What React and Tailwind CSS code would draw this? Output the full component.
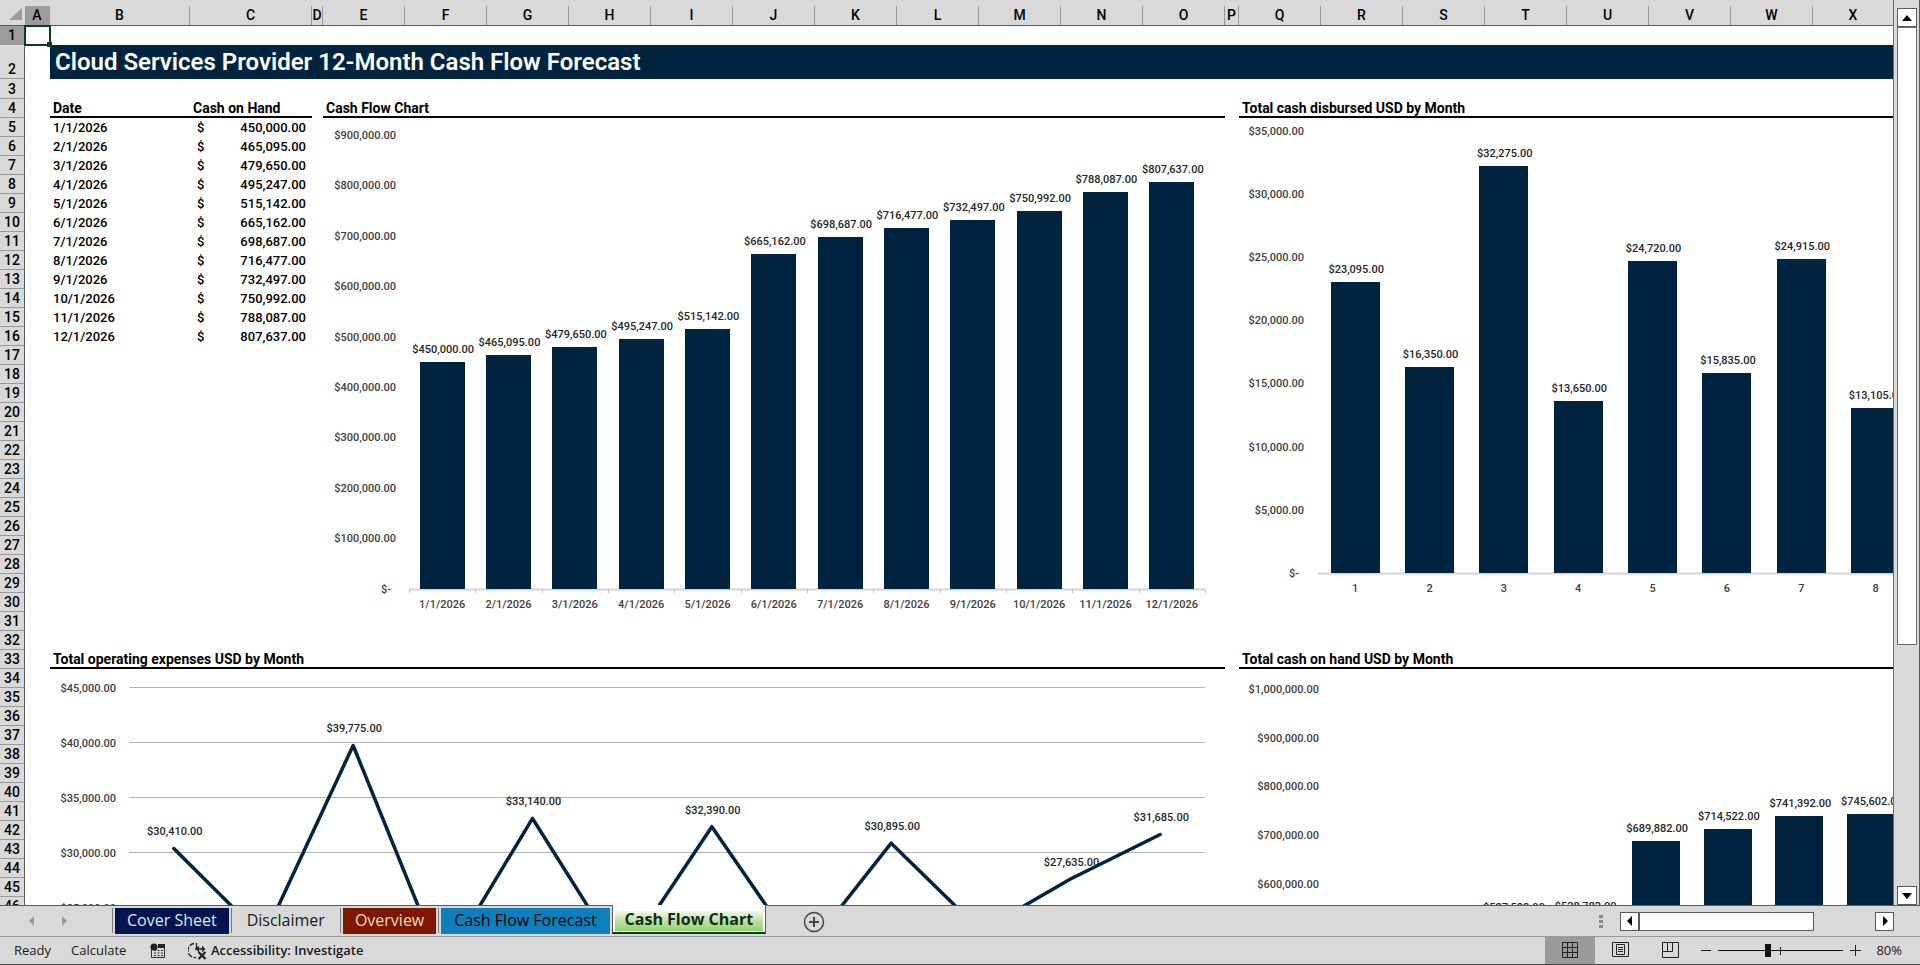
const NAVY = "#00233f";
const FONT = "font-['Roboto','Liberation_Sans',sans-serif]";
const UI_FONT = "font-['Open_Sans','Noto_Sans',sans-serif]";

const COLUMNS = [
  ["A", 25], ["B", 140], ["C", 122], ["D", 11], ["E", 82], ["F", 82], ["G", 82],
  ["H", 82], ["I", 82], ["J", 82], ["K", 82], ["L", 82], ["M", 82], ["N", 82],
  ["O", 82], ["P", 14], ["Q", 82], ["R", 82], ["S", 82], ["T", 82], ["U", 82],
  ["V", 82], ["W", 82], ["X", undefined],
];

const CASH = [
  ["1/1/2026", 450000], ["2/1/2026", 465095], ["3/1/2026", 479650], ["4/1/2026", 495247],
  ["5/1/2026", 515142], ["6/1/2026", 665162], ["7/1/2026", 698687], ["8/1/2026", 716477],
  ["9/1/2026", 732497], ["10/1/2026", 750992], ["11/1/2026", 788087], ["12/1/2026", 807637],
];

const DISBURSED = [23095, 16350, 32275, 13650, 24720, 15835, 24915, 13105].map((v, i) => [String(i + 1), v]);
const EXPENSES = [30410, 22290, 39775, 19645, 33140, 20190, 32390, 20560, 30895, 22925, 27635, 31685];
const ON_HAND = [null, null, 527582, 528782, 689882, 714522, 741392, 745602].map((v, i) => [String(i + 1), v]);

const amount = (v) => v.toLocaleString("en-US", { minimumFractionDigits: 2 });
const money = (v) => "$" + amount(v);

function AxisLabels({ right, top, step, from, by, count }) {
  return Array.from({ length: count }, (_, i) => {
    const v = from - i * by;
    return (
      <text key={i} x={v === 0 ? right - 5 : right} y={top + i * step + 4} textAnchor="end" className="fill-[#404040]">
        {v === 0 ? "$-" : money(v)}
      </text>
    );
  });
}

function BarChart({ label, width, height, data, axis, left, pitch, bar, base, unit, ticks, slots, categoryY }) {
  const yOf = (v) => base - v * unit;
  return (
    <svg role="img" aria-label={label} width={width} height={height} className={`block max-w-none text-[11px] font-medium ${FONT}`}>
      <AxisLabels {...axis} />
      <path d={`M${left} ${base + 0.5}h${pitch * slots}`} stroke="#d4d4d4" strokeWidth="2" />
      {ticks &&
        Array.from({ length: slots + 1 }, (_, i) => (
          <path key={i} d={`M${Math.round(left + i * pitch) + 0.5} ${base}v4`} stroke="#c4c4c4" />
        ))}
      {data.map(([name, v], i) => {
        const cx = left + pitch * (i + 0.5);
        return (
          v !== null && (
            <g key={name}>
              <rect x={Math.round(cx - bar / 2)} y={Math.round(yOf(v))} width={bar} height={Math.round(base - yOf(v))} fill={NAVY} />
              <text x={cx + 1} y={yOf(v) - 9} textAnchor="middle" className="fill-[#262626]">{money(v)}</text>
              {categoryY < height && (
                <text x={cx} y={categoryY} textAnchor="middle" className="fill-[#404040]">{name}</text>
              )}
            </g>
          )
        );
      })}
    </svg>
  );
}

function LineChart({ label, width, height }) {
  const top = 19;
  const step = 55;
  const left = 79;
  const pitch = 90 - 1 / 3;
  const points = EXPENSES.map((v, i) => [left + pitch * (i + 0.5), top + ((45000 - v) / 5000) * step]);
  return (
    <svg role="img" aria-label={label} width={width} height={height} className={`block max-w-none text-[11px] font-medium ${FONT}`}>
      <AxisLabels right={66} top={top} step={step} from={45000} by={5000} count={5} />
      {[0, 1, 2, 3, 4].map((i) => (
        <path key={i} d={`M${left} ${top + i * step - 0.5}h${pitch * 12}`} stroke="#b4b4b4" />
      ))}
      {EXPENSES.map((v, i) => (
        points[i][1] < height && (
          <text key={i} x={points[i][0] + 1} y={points[i][1] - 13} textAnchor="middle" className="fill-[#262626]">{money(v)}</text>
        )
      ))}
      <polyline points={points.map((p) => p.join(",")).join(" ")} fill="none" stroke={NAVY} strokeWidth="3.5" strokeLinecap="round" strokeLinejoin="round" />
    </svg>
  );
}

function Heading({ children, span }) {
  return (
    <td colSpan={span} className="border-b-2 border-black p-0 pl-[3px] align-bottom text-[14px] leading-[16px] font-bold whitespace-nowrap">
      {children}
    </td>
  );
}

function rowCells(n) {
  if (n === 1) {
    return (
      <>
        <td className="relative p-0">
          <div className="absolute -inset-px border-2 border-[#0b3d1d]" />
          <div className="absolute -right-[2px] -bottom-[2px] size-[5px] bg-[#0b3d1d]" />
        </td>
        <td colSpan={23} className="p-0" />
      </>
    );
  }
  if (n === 2) {
    return (
      <>
        <td className="p-0" />
        <td colSpan={23} className="bg-[#00233f] p-0 pl-[5px]">
          <h1 className="text-[24px] leading-[34px] font-semibold whitespace-nowrap text-white">
            Cloud Services Provider 12-Month Cash Flow Forecast
          </h1>
        </td>
      </>
    );
  }
  if (n === 4) {
    return (
      <>
        <td className="p-0" />
        <Heading>Date</Heading>
        <Heading>Cash on Hand</Heading>
        <td className="p-0" />
        <Heading span={11}>Cash Flow Chart</Heading>
        <td className="p-0" />
        <Heading span={8}>Total cash disbursed USD by Month</Heading>
      </>
    );
  }
  if (n === 33) {
    return (
      <>
        <td className="p-0" />
        <Heading span={14}>Total operating expenses USD by Month</Heading>
        <td className="p-0" />
        <Heading span={8}>Total cash on hand USD by Month</Heading>
      </>
    );
  }
  if (n === 34) {
    return (
      <>
        <td className="p-0" />
        <td colSpan={14} rowSpan={13} className="overflow-hidden p-0 align-top">
          <LineChart label="Total operating expenses USD by Month" width={1174} height={247} />
        </td>
        <td className="p-0" />
        <td colSpan={8} rowSpan={13} className="overflow-hidden p-0 align-top">
          <BarChart
            label="Total cash on hand USD by Month" width={980} height={247} data={ON_HAND} slots={12}
            axis={{ right: 80, top: 20, step: 48.7, from: 1000000, by: 100000, count: 5 }}
            left={95} pitch={71.6} bar={48} base={508} unit={0.000487} categoryY={530}
          />
        </td>
      </>
    );
  }
  if (n > 34) {
    return (
      <>
        <td className="p-0" />
        <td className="p-0" />
      </>
    );
  }
  const entry = n >= 5 && n <= 16 ? CASH[n - 5] : null;
  return (
    <>
      <td className="p-0" />
      <td className="p-0 pl-[3px] whitespace-nowrap">{entry && entry[0]}</td>
      <td className="p-0 pr-[6px] pl-[7px]">
        {entry && (
          <div className="flex justify-between">
            <span>$</span>
            <span>{amount(entry[1])}</span>
          </div>
        )}
      </td>
      <td className="p-0" />
      {n === 5 ? (
        <>
          <td colSpan={11} rowSpan={28} className="overflow-hidden p-0 align-top">
            <BarChart
              label="Cash Flow Chart" width={902} height={520} data={CASH} slots={12} ticks
              axis={{ right: 73, top: 17, step: 50.4, from: 900000, by: 100000, count: 10 }}
              left={86} pitch={66.33} bar={45} base={471} unit={0.000504} categoryY={490}
            />
          </td>
          <td className="p-0" />
          <td colSpan={8} rowSpan={28} className="overflow-hidden p-0 align-top">
            <BarChart
              label="Total cash disbursed USD by Month" width={980} height={520} data={DISBURSED} slots={12}
              axis={{ right: 65, top: 13, step: 63.1, from: 35000, by: 5000, count: 8 }}
              left={79} pitch={74.35} bar={49} base={455} unit={0.01262} categoryY={474}
            />
          </td>
        </>
      ) : n > 5 ? (
        <td className="p-0" />
      ) : (
        <td colSpan={20} className="p-0" />
      )}
    </>
  );
}

function Sheet() {
  return (
    <div className="min-w-0 flex-1 overflow-hidden border-r border-[#6b6b6b] bg-white">
      <table className={`w-full min-w-[1894px] table-fixed border-separate border-spacing-0 text-[13px] leading-[17px] font-medium text-black ${FONT}`}>
        <colgroup>
          <col className="w-[25px]" />
          {COLUMNS.map(([name, width]) => (
            <col key={name} style={{ width }} />
          ))}
        </colgroup>
        <thead>
          <tr className="h-[26px] bg-[#d9d9d9] text-[14px]">
            <th className="border-b border-[#5a5a5a] p-0 align-bottom">
              <svg aria-hidden="true" width="24" height="20" className="block"><path d="M22 3v12H9z" fill="#9b9b9b" /></svg>
            </th>
            {COLUMNS.map(([name]) => (
              <th key={name} scope="col" className={`border-b border-[#5a5a5a] p-0 pt-[6px] leading-[19px] font-medium ${name === "A" ? "bg-linear-to-b from-[#d9d9d9] from-[24%] to-[#9c9c9c] to-[24%]" : ""}`}>
                <div className="border-r border-[#9a9a9a]">{name}</div>
              </th>
            ))}
          </tr>
        </thead>
        <tbody>
          {Array.from({ length: 46 }, (_, i) => i + 1).map((n) => (
            <tr key={n} className={n === 2 ? "h-[34px]" : n === 3 ? "h-[20px]" : "h-[19px]"}>
              <th scope="row" className={`border-r border-b border-r-[#5a5a5a] border-b-[#9a9a9a] p-0 align-bottom text-[14px] leading-[18px] font-medium ${n === 1 ? "bg-[#9c9c9c]" : "bg-[#d9d9d9]"}`}>
                {n}
              </th>
              {rowCells(n)}
            </tr>
          ))}
        </tbody>
      </table>
    </div>
  );
}

function Arrow({ d, fill = "#000" }) {
  return <svg aria-hidden="true" width="10" height="10" viewBox="0 0 10 10"><path d={d} fill={fill} /></svg>;
}

const UP = "M5 2l5 6H0z";
const DOWN = "M5 8l5-6H0z";
const LEFT = "M2 5l5-5v10z";
const RIGHT = "M8 5L3 0v10z";

function VerticalScroll() {
  const button = "grid h-[19px] w-full shrink-0 place-items-center border border-[#5a5a5a] bg-white";
  return (
    <div className="flex w-[26px] shrink-0 flex-col border-r border-[#5a5a5a] bg-[#d9d9d9] pt-[8px] pr-[2px] pl-[3px]">
      <button type="button" aria-label="Scroll up" className={button}><Arrow d={UP} /></button>
      <div className="flex flex-1 flex-col">
        <div className="h-[72%] border border-[#6b6b6b] bg-white" />
      </div>
      <button type="button" aria-label="Scroll down" className={button}><Arrow d={DOWN} /></button>
    </div>
  );
}

function TabBar() {
  const tab = "h-[26px] pb-[2px] leading-[24px] whitespace-nowrap";
  const divider = "h-[25px] w-px bg-[#7a7a7a]";
  const arrow = "grid h-[19px] w-[19px] shrink-0 place-items-center border border-[#5a5a5a] bg-white";
  return (
    <div className={`flex h-[32px] shrink-0 items-start border-b border-[#9a9a9a] bg-[#d9d9d9] text-[16px] text-[#1a1a1a] ${UI_FONT}`}>
      <div className="flex h-full w-[112px] shrink-0 items-center gap-[22px] border-t border-[#5a5a5a] pl-[27px]">
        <button type="button" aria-label="Previous sheet"><Arrow d={LEFT} fill="#9a9a9a" /></button>
        <button type="button" aria-label="Next sheet"><Arrow d={RIGHT} fill="#9a9a9a" /></button>
      </div>
      <div className="flex h-full shrink-0 gap-[2px] border-t border-[#5a5a5a] pt-[2px] pr-[2px]">
        <div className={divider} />
        <button type="button" className={`${tab} bg-[#03144e] px-[12px] text-[#d8ecf2]`}>Cover Sheet</button>
        <div className={divider} />
        <button type="button" className={`${tab} px-[13px]`}>Disclaimer</button>
        <div className={divider} />
        <button type="button" className={`${tab} bg-[#7d1702] px-[12px] text-[#f7dcb8]`}>Overview</button>
        <div className={divider} />
        <button type="button" className={`${tab} bg-[#0f7fbc] px-[13px] text-black`}>Cash Flow Forecast</button>
      </div>
      <button type="button" aria-current="true" className="h-[29px] shrink-0 border-r border-b-2 border-l border-r-[#5a5a5a] border-b-[#0b3d1d] border-l-[#5a5a5a] bg-white px-[2px] pt-[6px] pb-px">
        <span className="block h-[20px] bg-linear-to-b from-[#f0fae4] via-[#c3dda6] to-[#8fd46a] px-[10px] leading-[16px] font-bold whitespace-nowrap text-[#0b3018]">Cash Flow Chart</span>
      </button>
      <div className="flex h-full flex-1 items-center border-t border-[#5a5a5a] pl-[37px]">
        <button type="button" aria-label="New sheet" className="pt-[2px]">
          <svg aria-hidden="true" width="22" height="22" viewBox="0 0 22 22" fill="none" stroke="#444">
            <circle cx="11" cy="11" r="9.5" strokeWidth="1.5" />
            <path d="M11 6v10M6 11h10" strokeWidth="2" />
          </svg>
        </button>
        <div className="mr-[17px] ml-auto flex flex-col gap-[2px]">
          {[0, 1, 2].map((i) => <span key={i} className="h-[3px] w-[4px] bg-[#8a8a8a]" />)}
        </div>
        <div className="mr-[26px] flex w-[274px] items-center">
          <button type="button" aria-label="Scroll left" className={arrow}><Arrow d={LEFT} /></button>
          <div className="flex-1"><div className="h-[19px] w-[74%] border border-[#5a5a5a] bg-white" /></div>
          <button type="button" aria-label="Scroll right" className={arrow}><Arrow d={RIGHT} /></button>
        </div>
      </div>
    </div>
  );
}

function StatusBar() {
  const view = "grid h-full w-[50px] place-items-center";
  return (
    <footer className={`flex h-[28px] shrink-0 items-center border-b border-[#444] bg-[#d9d9d9] pl-[14px] text-[13px] text-[#1a1a1a] ${UI_FONT}`}>
      <span className="w-[57px]">Ready</span>
      <span className="w-[79px]">Calculate</span>
      <button type="button" aria-label="Record macro" className="w-[38px]">
        <svg aria-hidden="true" width="16" height="16" viewBox="0 0 16 16">
          <path d="M1.500 6v8.500h13V4" fill="none" stroke="#333" />
          <path d="M8 1h7v4H8z" fill="#222" />
          <circle cx="4" cy="4" r="3.600" fill="#222" />
          <path d="M4 7.500h9M4 10h9M4 12.500h9" stroke="#333" strokeDasharray="2 1.500" />
        </svg>
      </button>
      <button type="button" className="flex items-center gap-[3px] font-semibold">
        <svg aria-hidden="true" width="20" height="18" viewBox="0 0 20 18" fill="none" stroke="#222" strokeWidth="1.300">
          <path d="M6 1.500A7 7 0 0 0 8 15.500" strokeDasharray="5 1.500" />
          <path d="M8.500 1v6M7 7h9M14 4.500L16.500 7 14 9.500M11 4.500L8.500 7l2.500 2.500" />
          <path d="M10.500 10l7 7M17.500 10l-7 7" strokeWidth="2.200" />
        </svg>
        <span>Accessibility: Investigate</span>
      </button>
      <div className="ml-auto flex h-full items-center">
        <button type="button" aria-label="Normal view" aria-pressed="true" className={`${view} bg-[#9a9a9a]`}>
          <svg aria-hidden="true" width="17" height="17" fill="none" stroke="#222"><path d="M.5.5h15v15H.5zM.5 5.500h15M.5 10.500h15M5.500 .5v15M10.500 .5v15" /></svg>
        </button>
        <button type="button" aria-label="Page layout view" className={view}>
          <svg aria-hidden="true" width="17" height="17" fill="none" stroke="#222"><path d="M.5.5h16v14H.5zM4.500 2.500h8v10h-8zM6 5.500h5M6 7.500h5M6 9.500h5" /></svg>
        </button>
        <button type="button" aria-label="Page break preview" className={view}>
          <svg aria-hidden="true" width="17" height="17" fill="none" stroke="#222"><path d="M.5.5h16v15H.5zM.5 9.500h10v-9M5.500 .5v9" /></svg>
        </button>
        <div className="ml-[6px] flex items-center gap-[7px]">
          <button type="button" aria-label="Zoom out"><svg aria-hidden="true" width="10" height="11" stroke="#222"><path d="M0 5.500h10" /></svg></button>
          <svg role="img" aria-label="Zoom level" width="125" height="15" stroke="#111">
            <path d="M0 7.500h125M62.500 4v8" />
            <path d="M47 1h6v13h-6z" fill="#111" stroke="none" />
          </svg>
          <button type="button" aria-label="Zoom in"><svg aria-hidden="true" width="11" height="11" stroke="#222"><path d="M0 5.500h11M5.500 0v11" /></svg></button>
        </div>
        <button type="button" className="mr-[18px] ml-[15px]">80%</button>
      </div>
    </footer>
  );
}

export default function App() {
  return (
    <div className="flex h-screen flex-col overflow-hidden bg-[#d9d9d9]">
      <main className="flex min-h-0 flex-1">
        <Sheet />
        <VerticalScroll />
      </main>
      <TabBar />
      <StatusBar />
    </div>
  );
}
